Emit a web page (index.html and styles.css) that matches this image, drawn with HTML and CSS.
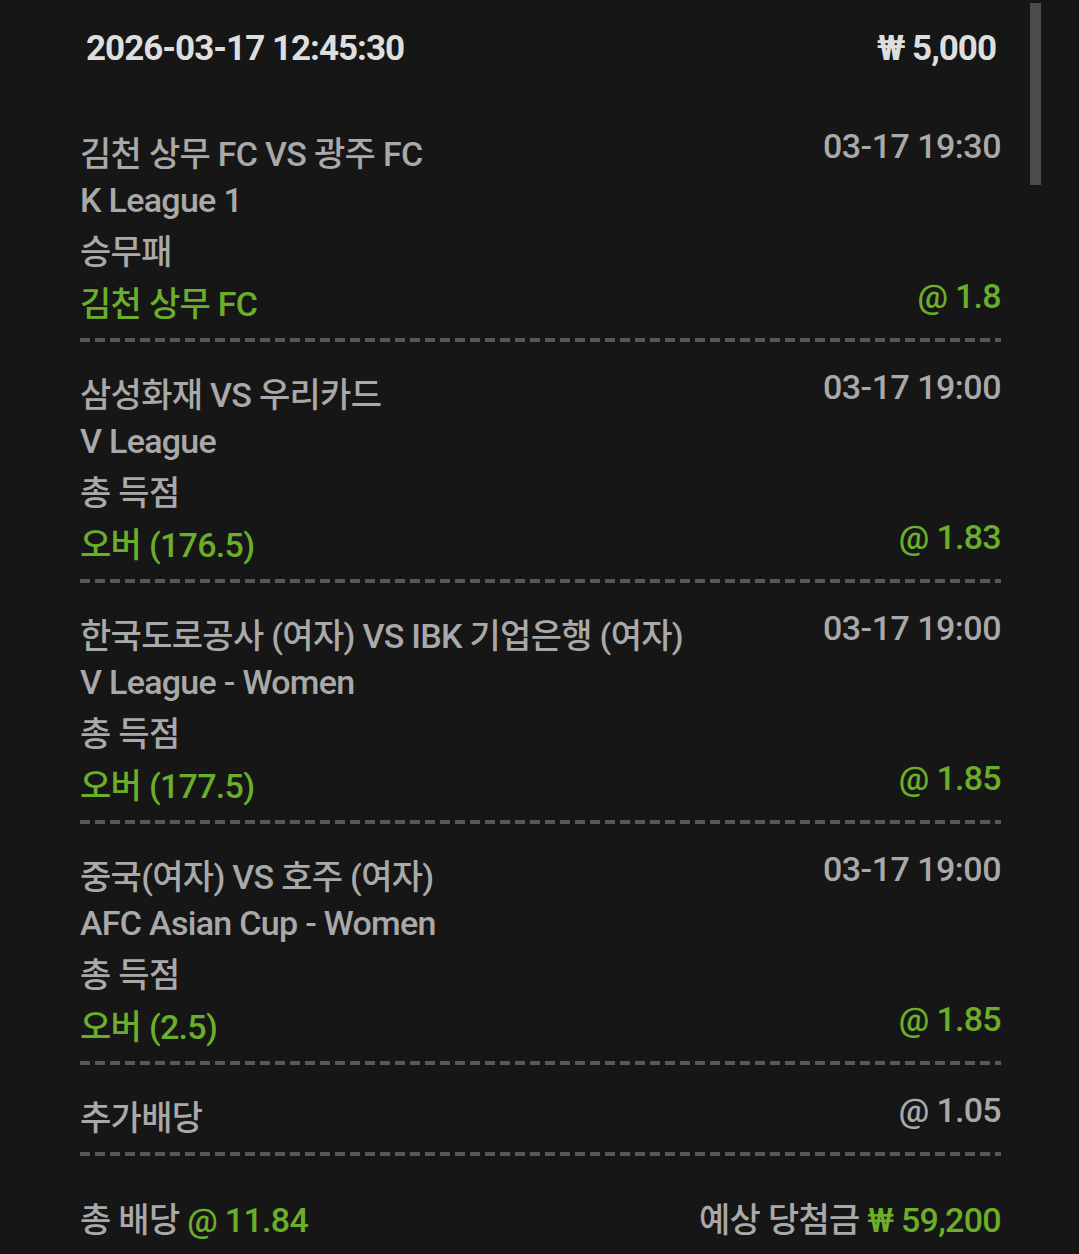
FILE: index.html
```html
<!DOCTYPE html>
<html>
  <head>
    <title>Bet Slip</title>
    <meta charset="UTF-8" />
    <link rel="stylesheet" href="styles.css">
  </head>
  <body>
    <div class="slip">
      <div class="scroll-thumb"></div>

      <div class="slip-head">
        <span>2026-03-17 12:45:30</span>
        <span>₩ 5,000</span>
      </div>

      <div class="bet">
        <div class="line">
          <span>김천 상무 FC VS 광주 FC</span>
          <span class="side time">03-17 19:30</span>
        </div>
        <div class="line">K League 1</div>
        <div class="line market">승무패</div>
        <div class="line pick">
          <span>김천 상무 FC</span>
          <span class="side">@ 1.8</span>
        </div>
      </div>

      <div class="bet">
        <div class="line">
          <span>삼성화재 VS 우리카드</span>
          <span class="side time">03-17 19:00</span>
        </div>
        <div class="line">V League</div>
        <div class="line market">총 득점</div>
        <div class="line pick">
          <span>오버 (176.5)</span>
          <span class="side">@ 1.83</span>
        </div>
      </div>

      <div class="bet">
        <div class="line">
          <span>한국도로공사 (여자) VS IBK 기업은행 (여자)</span>
          <span class="side time">03-17 19:00</span>
        </div>
        <div class="line">V League - Women</div>
        <div class="line market">총 득점</div>
        <div class="line pick">
          <span>오버 (177.5)</span>
          <span class="side">@ 1.85</span>
        </div>
      </div>

      <div class="bet">
        <div class="line">
          <span>중국(여자) VS 호주 (여자)</span>
          <span class="side time">03-17 19:00</span>
        </div>
        <div class="line">AFC Asian Cup - Women</div>
        <div class="line market">총 득점</div>
        <div class="line pick">
          <span>오버 (2.5)</span>
          <span class="side">@ 1.85</span>
        </div>
      </div>

      <div class="bet">
        <div class="line">
          <span>추가배당</span>
          <span class="side">@ 1.05</span>
        </div>
      </div>

      <div class="total">
        <span>총 배당 <span class="green">@ 11.84</span></span>
        <span>예상 당첨금 <span class="green">₩ 59,200</span></span>
      </div>
    </div>
  </body>
</html>
```

FILE: styles.css
```css
body {
  margin: 0;
  background: #161616;
  font-family: Roboto, "Noto Sans CJK KR", sans-serif;
  color: #a9a9a9;
}

.slip {
  position: relative;
  padding: 0 78px 40px 80px;
  font-size: 34px;
  font-weight: 500;
  line-height: 46px;
  letter-spacing: -0.7px;
}

.scroll-thumb {
  position: absolute;
  top: 3px;
  right: 38px;
  width: 11px;
  height: 182px;
  background: #4b4b4b;
}

.slip-head {
  display: flex;
  justify-content: space-between;
  padding: 26px 5px 29px 6px;
  font-size: 35px;
  font-weight: bold;
  letter-spacing: -1px;
  color: #dedede;
}

.bet {
  padding-top: 30px;
}

.bet::after {
  content: "";
  display: block;
  height: 4px;
  margin-top: 11px;
  background: repeating-linear-gradient(90deg, #575757 0 10px, transparent 10px 15px);
}

.line {
  display: flex;
  justify-content: space-between;
  align-items: flex-start;
}

.side {
  line-height: 30px;
}

.time {
  letter-spacing: -0.5px;
}

.market {
  margin-top: 6px;
}

.pick {
  margin-top: 6px;
  color: #6aae2a;
}

.total {
  display: flex;
  justify-content: space-between;
  padding-top: 41px;
}

.green {
  color: #6aae2a;
}
```
